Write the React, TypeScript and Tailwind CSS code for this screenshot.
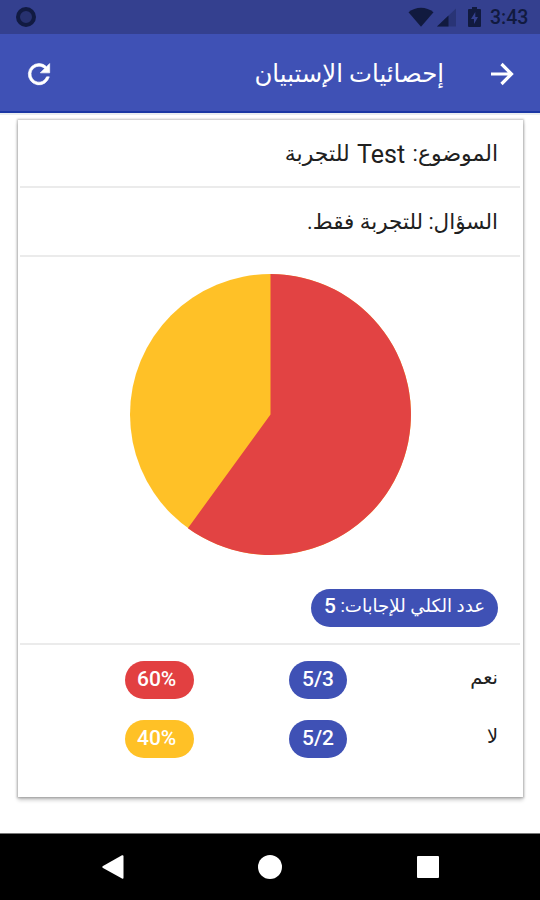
import React from "react";

function StatusBar() {
  return (
    <div dir="ltr" className="flex h-[34px] items-center justify-between bg-[#34408f] pl-4 pr-[11px] text-[#111a3f]">
      <div className="h-5 w-5 rounded-full border-4 border-[#111a42] bg-[#27316f]" />
      <div className="flex items-center">
        <svg className="h-5 w-[26px]" viewBox="0 0 26 20" fill="currentColor">
          <path d="M.5 5.2C7.500-.9 18.500-.9 25.500 5.200L13 19.800Z" />
        </svg>
        <svg className="ml-[3px] h-5 w-5" viewBox="0 0 20 20" fill="currentColor">
          <path d="M0 19.500 19 1.500V19.500Z" opacity=".3" />
          <path d="M0 19.500 11.500 8.600V19.500Z" />
        </svg>
        <svg className="ml-[11px] h-5 w-[13px]" viewBox="0 0 13 20" fill="currentColor">
          <path fillRule="evenodd" d="M4 0H9V2H12Q13 2 13 3V19Q13 20 12 20H1Q0 20 0 19V3Q0 2 1 2H4ZM7.300 5 3 12H6V17L10 10H7.300Z" />
        </svg>
        <span className="ml-[9px] w-[39px] pt-px text-[19.500px] leading-5 font-medium">3:43</span>
      </div>
    </div>
  );
}

function AppBar() {
  return (
    <header className="flex h-[79px] items-center border-b-2 border-[#1b37a4] bg-[#3f51b5] pr-[26px] pl-[23px] text-white">
      <svg className="h-7 w-6 overflow-visible" viewBox="0 0 24 28" fill="none" stroke="currentColor" strokeWidth="3.200">
        <path d="M1 15H22M11.500 5 21.500 15 11.500 25" />
      </svg>
      <h1 className="mr-[46px] pt-1 text-[24.400px] font-normal">إحصائيات الإستبيان</h1>
      <svg className="mr-auto h-[32px] w-[32px]" viewBox="0 0 24 24" fill="currentColor" stroke="currentColor" strokeWidth=".5">
        <path d="M17.650 6.350A7.950 7.950 0 0 0 12 4a8 8 0 1 0 7.730 10h-2.080A6 6 0 1 1 12 6c1.660 0 3.140.69 4.220 1.780L13 11h7V4z" transform="translate(0 .9)" />
      </svg>
    </header>
  );
}

function ResultRow({ label, votes, percent, color }: { label: string; votes: string; percent: string; color: string }) {
  return (
    <div className="flex h-[59px] items-center text-[21px]">
      <span className="w-[151px] pb-1 text-[19.500px]">{label}</span>
      <div className="w-[153px]">
        <span dir="ltr" className="flex h-[38px] w-[58px] items-center justify-center rounded-full bg-[#3f51b5] font-medium text-white">{votes}</span>
      </div>
      <span dir="ltr" className={`flex h-[38px] w-[69px] items-center rounded-full pl-[12px] font-medium text-white ${color}`}>{percent}</span>
    </div>
  );
}

export default function App() {
  return (
    <div dir="rtl" className="flex h-[900px] w-[540px] flex-col overflow-hidden bg-white font-['Roboto','DejaVu_Sans',sans-serif] text-[#202020]">
      <StatusBar />
      <AppBar />
      <main className="flex-1 border-t-2 border-[#e9edf0] pr-[17px] pl-[18px] pt-[5px]">
        <section className="h-[677px] bg-white pr-[3px] pl-[2px] shadow-[0_0_2px_1px_rgba(0,0,0,0.24),0_3px_4px_rgba(0,0,0,0.22)]">
          <div className="flex h-[68px] items-center border-b-2 border-[#ebebeb] pr-[22px] text-[22px]">
            <p className="[word-spacing:2px]">الموضوع: <span className="inline-block translate-y-[2px] text-[25px]">Test</span> للتجربة</p>
          </div>
          <div className="flex h-[69px] items-center border-b-2 border-[#ebebeb] pt-[2px] pr-[22px] text-[21.500px]">
            <p>السؤال: للتجربة فقط.</p>
          </div>
          <div className="flex h-[388px] flex-col border-b-2 border-[#ebebeb] pt-4">
            <svg className="ml-[109px] mr-auto h-[283px] w-[283px]" viewBox="0 0 283 283">
              <circle cx="141.500" cy="141.500" r="140.500" fill="#ffc127" />
              <path d="M141.500 141.500V1A140.500 140.500 0 1 1 58.900 255.200Z" fill="#e24343" />
            </svg>
            <div className="mt-[33px] mr-[22px] flex h-[38px] w-[187px] items-center justify-center self-start rounded-full bg-[#3f51b5] text-[18.200px] text-white">
              <span className="pb-1">عدد الكلي للإجابات: <span className="inline-block translate-y-px text-[21px] font-medium">5</span></span>
            </div>
          </div>
          <div className="pt-[5px] pr-[22px]">
            <ResultRow label="نعم" votes="5/3" percent="60%" color="bg-[#e24041]" />
            <ResultRow label="لا" votes="5/2" percent="40%" color="bg-[#ffc126]" />
          </div>
        </section>
      </main>
      <nav dir="ltr" className="flex h-[67px] shrink-0 items-center border-t border-[#777] bg-black pl-[102px] text-white">
        <svg className="h-6 w-[22px]" viewBox="0 0 22 24" fill="currentColor"><path d="M20 .3Q21.500-.3 21.500 1.500V22.500Q21.500 24.300 20 23.500L1 13Q-.5 12 1 11Z" /></svg>
        <span className="ml-[134px] h-6 w-6 rounded-full bg-white" />
        <span className="ml-[135px] h-[22px] w-[22px] rounded-[1px] bg-white" />
      </nav>
    </div>
  );
}
